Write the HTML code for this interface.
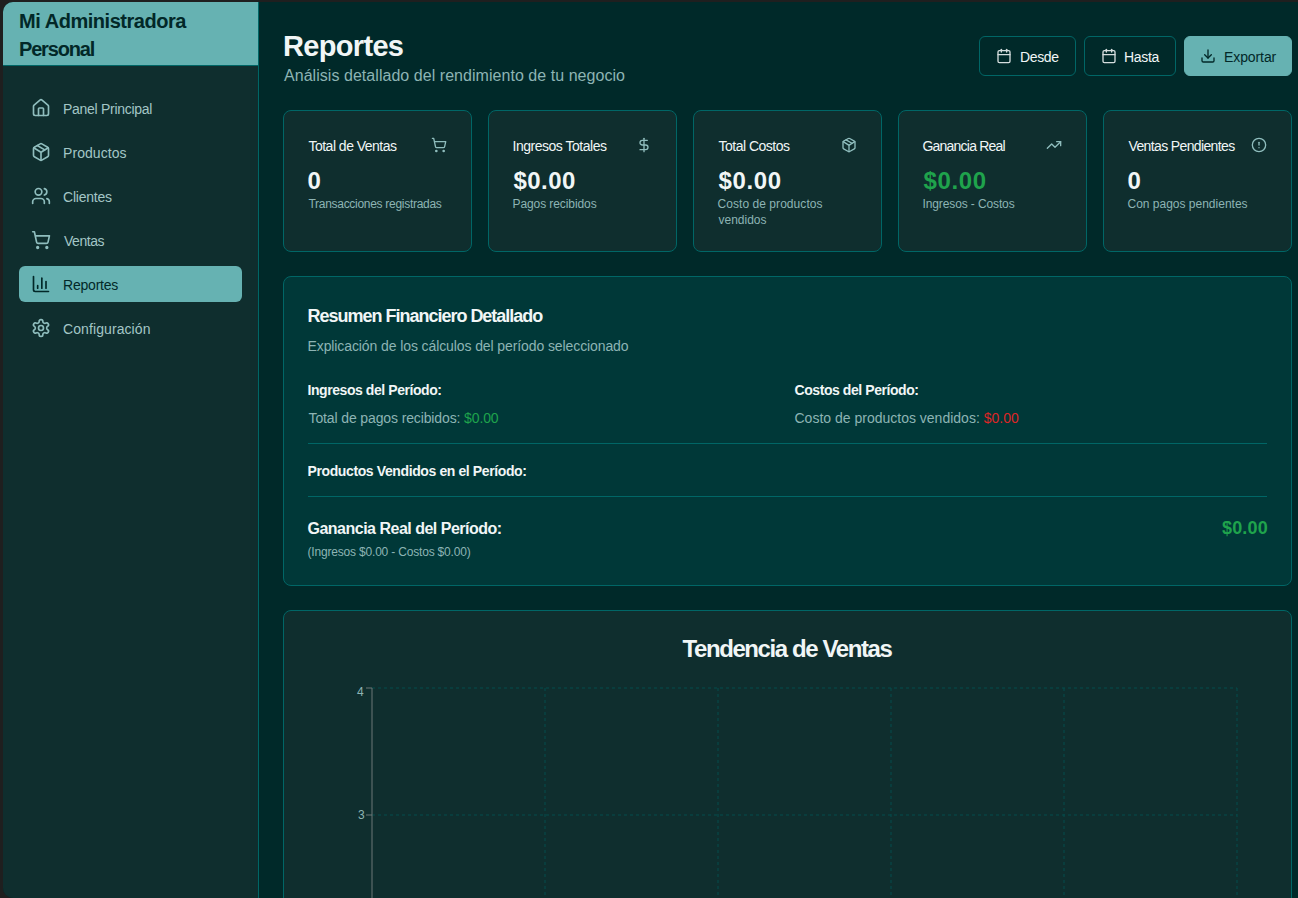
<!DOCTYPE html>
<html lang="es">
<head>
<meta charset="utf-8">
<title>Reportes</title>
<style>
*{box-sizing:border-box;margin:0;padding:0}
html,body{width:1298px;height:898px;overflow:hidden;background:#1f1f1f;font-family:"Liberation Sans",sans-serif}
.win{position:absolute;left:3px;top:2px;width:1320px;height:896px;background:#002929;border-radius:10px 0 0 10px;overflow:hidden}
.pg{position:absolute;left:-3px;top:-2px;width:1298px;height:898px}
.side{position:absolute;left:3px;top:2px;width:256px;height:896px;background:#0f2e2e;border-right:1px solid #006666}
.brand{position:absolute;left:3px;top:2px;width:255px;height:64px;background:#66b2b2;border-bottom:1px solid #006666}
.act{position:absolute;left:19px;top:266px;width:223px;height:36px;border-radius:6px;background:#66b2b2}
.tx{position:absolute;white-space:nowrap}
.card{position:absolute;background:#0f2e2e;border:1px solid #006666;border-radius:8px}
.btn{position:absolute;top:36px;height:40px;border:1px solid #006666;border-radius:6px}
.ic{position:absolute;fill:none;stroke-linecap:round;stroke-linejoin:round}
.grid{position:absolute}
.hr{position:absolute;left:308px;width:959px;height:1px;background:#006666}
</style>
</head>
<body>
<div class="win"><div class="pg">
<div class="side"></div>
<div class="brand"></div>
<div class="act"></div>
<div class="btn" style="left:979px;width:97px"></div>
<div class="btn" style="left:1084px;width:92px"></div>
<div class="btn" style="left:1184px;width:108px;background:#66b2b2;border-color:#66b2b2"></div>
<div class="card" style="left:283px;top:110px;width:189px;height:142px"></div>
<div class="card" style="left:488px;top:110px;width:189px;height:142px"></div>
<div class="card" style="left:693px;top:110px;width:189px;height:142px"></div>
<div class="card" style="left:898px;top:110px;width:189px;height:142px"></div>
<div class="card" style="left:1103px;top:110px;width:189px;height:142px"></div>
<div class="card" style="left:283px;top:276px;width:1009px;height:310px;background:#003838"></div>
<div class="hr" style="top:443px"></div>
<div class="hr" style="top:496px"></div>
<div class="card" style="left:283px;top:610px;width:1009px;height:400px"></div>
<svg class="grid" style="left:0;top:0;width:1298px;height:898px" viewBox="0 0 1298 898">
<line x1="372" x2="1237" y1="688" y2="688" stroke="#044c4c" stroke-dasharray="3 3"/>
<line x1="372" x2="1237" y1="815" y2="815" stroke="#044c4c" stroke-dasharray="3 3"/>
<line x1="545" x2="545" y1="688" y2="898" stroke="#044c4c" stroke-dasharray="3 3"/>
<line x1="718" x2="718" y1="688" y2="898" stroke="#044c4c" stroke-dasharray="3 3"/>
<line x1="891" x2="891" y1="688" y2="898" stroke="#044c4c" stroke-dasharray="3 3"/>
<line x1="1064" x2="1064" y1="688" y2="898" stroke="#044c4c" stroke-dasharray="3 3"/>
<line x1="1237" x2="1237" y1="688" y2="898" stroke="#044c4c" stroke-dasharray="3 3"/>
<line x1="372" x2="372" y1="688" y2="898" stroke="#6c7676"/>
<line x1="366" x2="372" y1="688" y2="688" stroke="#6c7676"/>
<line x1="366" x2="372" y1="815" y2="815" stroke="#6c7676"/>
</svg>
<svg class="ic" style="left:31px;top:98px;width:20px;height:20px;stroke:#8fbdbd;stroke-width:2" viewBox="0 0 24 24"><path d="M15 21v-8a1 1 0 0 0-1-1h-4a1 1 0 0 0-1 1v8"/><path d="M3 10a2 2 0 0 1 .709-1.528l7-5.999a2 2 0 0 1 2.582 0l7 5.999A2 2 0 0 1 21 10v9a2 2 0 0 1-2 2H5a2 2 0 0 1-2-2z"/></svg>
<svg class="ic" style="left:31px;top:142px;width:20px;height:20px;stroke:#8fbdbd;stroke-width:2" viewBox="0 0 24 24"><path d="M11 21.73a2 2 0 0 0 2 0l7-4A2 2 0 0 0 21 16V8a2 2 0 0 0-1-1.73l-7-4a2 2 0 0 0-2 0l-7 4A2 2 0 0 0 3 8v8a2 2 0 0 0 1 1.73z"/><path d="M12 22V12"/><path d="m3.3 7 7.703 4.734a2 2 0 0 0 1.994 0L20.7 7"/><path d="m7.5 4.27 9 5.15"/></svg>
<svg class="ic" style="left:31px;top:186px;width:20px;height:20px;stroke:#8fbdbd;stroke-width:2" viewBox="0 0 24 24"><path d="M16 21v-2a4 4 0 0 0-4-4H6a4 4 0 0 0-4 4v2"/><circle cx="9" cy="7" r="4"/><path d="M22 21v-2a4 4 0 0 0-3-3.87"/><path d="M16 3.13a4 4 0 0 1 0 7.75"/></svg>
<svg class="ic" style="left:31px;top:230px;width:20px;height:20px;stroke:#8fbdbd;stroke-width:2" viewBox="0 0 24 24"><circle cx="8" cy="21" r="1"/><circle cx="19" cy="21" r="1"/><path d="M2.05 2.05h2l2.66 12.42a2 2 0 0 0 2 1.58h9.78a2 2 0 0 0 1.95-1.57l1.65-7.43H5.12"/></svg>
<svg class="ic" style="left:31px;top:274px;width:20px;height:20px;stroke:#022828;stroke-width:2" viewBox="0 0 24 24"><path d="M3 3v16a2 2 0 0 0 2 2h16"/><path d="M18 17V9"/><path d="M13 17V5"/><path d="M8 17v-3"/></svg>
<svg class="ic" style="left:31px;top:318px;width:20px;height:20px;stroke:#8fbdbd;stroke-width:2" viewBox="0 0 24 24"><path d="M12.22 2h-.44a2 2 0 0 0-2 2v.18a2 2 0 0 1-1 1.73l-.43.25a2 2 0 0 1-2 0l-.15-.08a2 2 0 0 0-2.73.73l-.22.38a2 2 0 0 0 .73 2.73l.15.1a2 2 0 0 1 1 1.72v.51a2 2 0 0 1-1 1.74l-.15.09a2 2 0 0 0-.73 2.73l.22.38a2 2 0 0 0 2.73.73l.15-.08a2 2 0 0 1 2 0l.43.25a2 2 0 0 1 1 1.73V20a2 2 0 0 0 2 2h.44a2 2 0 0 0 2-2v-.18a2 2 0 0 1 1-1.73l.43-.25a2 2 0 0 1 2 0l.15.08a2 2 0 0 0 2.73-.73l.22-.39a2 2 0 0 0-.73-2.73l-.15-.08a2 2 0 0 1-1-1.74v-.5a2 2 0 0 1 1-1.74l.15-.09a2 2 0 0 0 .73-2.73l-.22-.38a2 2 0 0 0-2.73-.73l-.15.08a2 2 0 0 1-2 0l-.43-.25a2 2 0 0 1-1-1.73V4a2 2 0 0 0-2-2z"/><circle cx="12" cy="12" r="3"/></svg>
<svg class="ic" style="left:996px;top:48px;width:16px;height:16px;stroke:#d5dede;stroke-width:2" viewBox="0 0 24 24"><path d="M8 2v4"/><path d="M16 2v4"/><rect width="18" height="18" x="3" y="4" rx="2"/><path d="M3 10h18"/></svg>
<svg class="ic" style="left:1101px;top:48px;width:16px;height:16px;stroke:#d5dede;stroke-width:2" viewBox="0 0 24 24"><path d="M8 2v4"/><path d="M16 2v4"/><rect width="18" height="18" x="3" y="4" rx="2"/><path d="M3 10h18"/></svg>
<svg class="ic" style="left:1200px;top:48px;width:16px;height:16px;stroke:#022828;stroke-width:2" viewBox="0 0 24 24"><path d="M21 15v4a2 2 0 0 1-2 2H5a2 2 0 0 1-2-2v-4"/><polyline points="7 10 12 15 17 10"/><line x1="12" x2="12" y1="15" y2="3"/></svg>
<svg class="ic" style="left:431px;top:137px;width:16px;height:16px;stroke:#8fbdbd;stroke-width:2" viewBox="0 0 24 24"><circle cx="8" cy="21" r="1"/><circle cx="19" cy="21" r="1"/><path d="M2.05 2.05h2l2.66 12.42a2 2 0 0 0 2 1.58h9.78a2 2 0 0 0 1.95-1.57l1.65-7.43H5.12"/></svg>
<svg class="ic" style="left:636px;top:137px;width:16px;height:16px;stroke:#8fbdbd;stroke-width:2" viewBox="0 0 24 24"><line x1="12" x2="12" y1="2" y2="22"/><path d="M17 5H9.5a3.5 3.5 0 0 0 0 7h5a3.5 3.5 0 0 1 0 7H6"/></svg>
<svg class="ic" style="left:841px;top:137px;width:16px;height:16px;stroke:#8fbdbd;stroke-width:2" viewBox="0 0 24 24"><path d="M11 21.73a2 2 0 0 0 2 0l7-4A2 2 0 0 0 21 16V8a2 2 0 0 0-1-1.73l-7-4a2 2 0 0 0-2 0l-7 4A2 2 0 0 0 3 8v8a2 2 0 0 0 1 1.73z"/><path d="M12 22V12"/><path d="m3.3 7 7.703 4.734a2 2 0 0 0 1.994 0L20.7 7"/><path d="m7.5 4.27 9 5.15"/></svg>
<svg class="ic" style="left:1046px;top:137px;width:16px;height:16px;stroke:#8fbdbd;stroke-width:2" viewBox="0 0 24 24"><polyline points="22 7 13.5 15.5 8.5 10.5 2 17"/><polyline points="16 7 22 7 22 13"/></svg>
<svg class="ic" style="left:1251px;top:137px;width:16px;height:16px;stroke:#8fbdbd;stroke-width:2" viewBox="0 0 24 24"><circle cx="12" cy="12" r="10"/><line x1="12" x2="12" y1="8" y2="12"/><line x1="12" x2="12.01" y1="16" y2="16"/></svg>
<div class="tx" style="left:19.00px;top:8.07px;line-height:26px;font-size:20px;font-weight:700;color:#022828;letter-spacing:-0.461px">Mi Administradora</div>
<div class="tx" style="left:19.00px;top:36.07px;line-height:26px;font-size:20px;font-weight:700;color:#022828;letter-spacing:-1.177px">Personal</div>
<div class="tx" style="left:63.00px;top:99.65px;line-height:19px;font-size:14px;font-weight:400;color:#a3c6c6;letter-spacing:-0.288px">Panel Principal</div>
<div class="tx" style="left:63.00px;top:143.65px;line-height:19px;font-size:14px;font-weight:400;color:#a3c6c6;letter-spacing:0.063px">Productos</div>
<div class="tx" style="left:63.00px;top:187.65px;line-height:19px;font-size:14px;font-weight:400;color:#a3c6c6;letter-spacing:-0.235px">Clientes</div>
<div class="tx" style="left:64.00px;top:231.65px;line-height:19px;font-size:14px;font-weight:400;color:#a3c6c6;letter-spacing:-0.471px">Ventas</div>
<div class="tx" style="left:63.00px;top:275.65px;line-height:19px;font-size:14px;font-weight:400;color:#022828;letter-spacing:-0.209px">Reportes</div>
<div class="tx" style="left:63.00px;top:319.65px;line-height:19px;font-size:14px;font-weight:400;color:#a3c6c6;letter-spacing:0.089px">Configuración</div>
<div class="tx" style="left:283.00px;top:26.95px;line-height:38px;font-size:29px;font-weight:700;color:#f1f6f6;letter-spacing:-0.677px">Reportes</div>
<div class="tx" style="left:284.00px;top:64.96px;line-height:21px;font-size:16px;font-weight:400;color:#8db4b4;letter-spacing:0.044px">Análisis detallado del rendimiento de tu negocio</div>
<div class="tx" style="left:1020.00px;top:47.65px;line-height:19px;font-size:14px;font-weight:400;color:#f1f6f6;letter-spacing:-0.354px">Desde</div>
<div class="tx" style="left:1124.00px;top:47.65px;line-height:19px;font-size:14px;font-weight:400;color:#f1f6f6;letter-spacing:-0.336px">Hasta</div>
<div class="tx" style="left:1224.00px;top:47.65px;line-height:19px;font-size:14px;font-weight:400;color:#022828;letter-spacing:-0.097px">Exportar</div>
<div class="tx" style="left:308.50px;top:136.65px;line-height:19px;font-size:14px;font-weight:400;color:#f1f6f6;letter-spacing:-0.517px">Total de Ventas</div>
<div class="tx" style="left:307.50px;top:164.68px;line-height:32px;font-size:24px;font-weight:700;color:#f1f6f6;letter-spacing:0.000px">0</div>
<div class="tx" style="left:308.50px;top:195.84px;line-height:16px;font-size:12px;font-weight:400;color:#8db4b4;letter-spacing:-0.292px">Transacciones registradas</div>
<div class="tx" style="left:512.50px;top:136.65px;line-height:19px;font-size:14px;font-weight:400;color:#f1f6f6;letter-spacing:-0.477px">Ingresos Totales</div>
<div class="tx" style="left:513.50px;top:164.68px;line-height:32px;font-size:24px;font-weight:700;color:#f1f6f6;letter-spacing:0.438px">$0.00</div>
<div class="tx" style="left:512.50px;top:195.84px;line-height:16px;font-size:12px;font-weight:400;color:#8db4b4;letter-spacing:-0.086px">Pagos recibidos</div>
<div class="tx" style="left:718.50px;top:136.65px;line-height:19px;font-size:14px;font-weight:400;color:#f1f6f6;letter-spacing:-0.504px">Total Costos</div>
<div class="tx" style="left:718.50px;top:164.68px;line-height:32px;font-size:24px;font-weight:700;color:#f1f6f6;letter-spacing:0.662px">$0.00</div>
<div class="tx" style="left:717.50px;top:195.84px;line-height:16px;font-size:12px;font-weight:400;color:#8db4b4;letter-spacing:0.055px">Costo de productos</div>
<div class="tx" style="left:718.50px;top:211.84px;line-height:16px;font-size:12px;font-weight:400;color:#8db4b4;letter-spacing:-0.006px">vendidos</div>
<div class="tx" style="left:922.50px;top:136.65px;line-height:19px;font-size:14px;font-weight:400;color:#f1f6f6;letter-spacing:-0.782px">Ganancia Real</div>
<div class="tx" style="left:923.50px;top:164.68px;line-height:32px;font-size:24px;font-weight:700;color:#1fa34c;letter-spacing:0.662px">$0.00</div>
<div class="tx" style="left:922.50px;top:195.84px;line-height:16px;font-size:12px;font-weight:400;color:#8db4b4;letter-spacing:-0.117px">Ingresos - Costos</div>
<div class="tx" style="left:1128.50px;top:136.65px;line-height:19px;font-size:14px;font-weight:400;color:#f1f6f6;letter-spacing:-0.633px">Ventas Pendientes</div>
<div class="tx" style="left:1127.50px;top:164.68px;line-height:32px;font-size:24px;font-weight:700;color:#f1f6f6;letter-spacing:0.000px">0</div>
<div class="tx" style="left:1127.50px;top:195.84px;line-height:16px;font-size:12px;font-weight:400;color:#8db4b4;letter-spacing:-0.002px">Con pagos pendientes</div>
<div class="tx" style="left:307.50px;top:303.76px;line-height:24px;font-size:18px;font-weight:700;color:#f1f6f6;letter-spacing:-1.009px">Resumen Financiero Detallado</div>
<div class="tx" style="left:307.50px;top:336.65px;line-height:19px;font-size:14px;font-weight:400;color:#8db4b4;letter-spacing:-0.098px">Explicación de los cálculos del período seleccionado</div>
<div class="tx" style="left:307.50px;top:380.65px;line-height:19px;font-size:14px;font-weight:700;color:#f1f6f6;letter-spacing:-0.431px">Ingresos del Período:</div>
<div class="tx" style="left:308.50px;top:408.65px;line-height:19px;font-size:14px;font-weight:400;color:#8db4b4;letter-spacing:-0.122px">Total de pagos recibidos: <span style='color:#1fa34c'>$0.00</span></div>
<div class="tx" style="left:794.50px;top:380.65px;line-height:19px;font-size:14px;font-weight:700;color:#f1f6f6;letter-spacing:-0.429px">Costos del Período:</div>
<div class="tx" style="left:794.50px;top:408.65px;line-height:19px;font-size:14px;font-weight:400;color:#8db4b4;letter-spacing:0.002px">Costo de productos vendidos: <span style='color:#dc2626'>$0.00</span></div>
<div class="tx" style="left:307.50px;top:461.65px;line-height:19px;font-size:14px;font-weight:700;color:#f1f6f6;letter-spacing:-0.387px">Productos Vendidos en el Período:</div>
<div class="tx" style="left:307.50px;top:517.96px;line-height:21px;font-size:16px;font-weight:700;color:#f1f6f6;letter-spacing:-0.504px">Ganancia Real del Período:</div>
<div class="tx" style="left:307.50px;top:543.84px;line-height:16px;font-size:12px;font-weight:400;color:#8db4b4;letter-spacing:-0.185px">(Ingresos $0.00 - Costos $0.00)</div>
<div class="tx" style="left:1222.00px;top:515.76px;line-height:24px;font-size:18px;font-weight:700;color:#1fa34c;letter-spacing:0.171px">$0.00</div>
<div class="tx" style="left:682.50px;top:632.68px;line-height:32px;font-size:24px;font-weight:700;color:#f1f6f6;letter-spacing:-1.405px">Tendencia de Ventas</div>
<div class="tx" style="left:357.00px;top:683.84px;line-height:16px;font-size:12px;font-weight:400;color:#8db4b4;letter-spacing:0.000px">4</div>
<div class="tx" style="left:358.00px;top:806.84px;line-height:16px;font-size:12px;font-weight:400;color:#8db4b4;letter-spacing:0.000px">3</div>
</div></div>
</body>
</html>
